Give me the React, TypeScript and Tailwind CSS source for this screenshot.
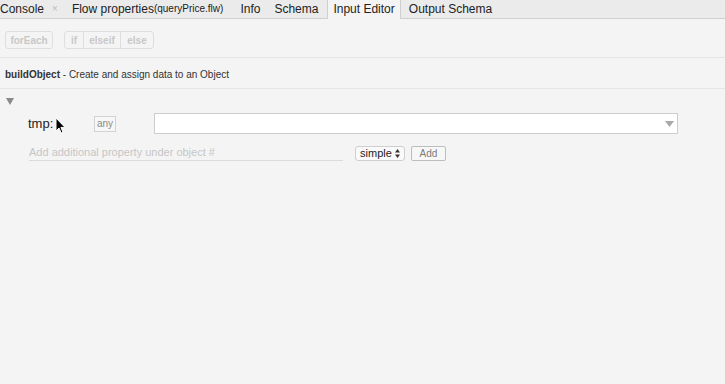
import React from "react";

const font = { fontFamily: '"Liberation Sans", Arial, Helvetica, sans-serif' };

export default function App() {
  return (
    <div className="relative w-[725px] h-[384px] overflow-hidden bg-[#f4f4f4] text-[#222]" style={font}>
      {/* tab bar */}
      <div className="flex h-[19px] items-stretch border-b border-[#cfcfcf] bg-[#ebebeb] pb-[1px] text-[12px] leading-none">
        <div className="flex items-center">Console</div>
        <div className="ml-[8px] flex items-center text-[10px] text-[#bdbdbd]">×</div>
        <div className="ml-[14px] flex items-center">
          Flow properties<span className="text-[10px]">(queryPrice.flw)</span>
        </div>
        <div className="ml-[17px] flex items-center">Info</div>
        <div className="ml-[14px] flex items-center">Schema</div>
        <div className="ml-[9px] -mb-[2px] flex items-center border-x border-[#cfcfcf] bg-[#f4f4f4] pb-[1px] pl-[5px] pr-[5px]">
          Input Editor
        </div>
        <div className="ml-[8px] flex items-center">Output Schema</div>
      </div>

      {/* toolbar */}
      <div className="flex h-[39px] items-start gap-[11px] border-b border-[#e4e4e4] pl-[5px] pt-[12px] text-[10px] font-bold text-[#c8c8c8]">
        <div className="flex h-[18px] w-[48px] items-center justify-center rounded-[3px] border border-[#dedede]">forEach</div>
        <div className="flex h-[18px] rounded-[3px] border border-[#dedede]">
          <div className="flex w-[19px] items-center justify-center border-r border-[#dedede]">if</div>
          <div className="flex w-[37px] items-center justify-center border-r border-[#dedede]">elseif</div>
          <div className="flex w-[32px] items-center justify-center">else</div>
        </div>
      </div>

      {/* description */}
      <div className="flex h-[31px] items-center border-b border-[#e6e6e6] pl-[5px] pt-[3px] text-[10px] text-[#333]">
        <span className="font-bold">buildObject</span>
        <span>&nbsp;- Create and assign data to an Object</span>
      </div>

      {/* triangle */}
      <div className="flex pl-[6px] pt-[9px]">
        <svg width="8" height="7" viewBox="0 0 8 7">
          <path d="M0 0 L8 0 L4 7 Z" fill="#8a8a8a" />
        </svg>
      </div>

      {/* tmp row */}
      <div className="mt-[8px] flex h-[21px] items-center">
        <div className="ml-[28px] w-[66px] text-[13px] text-[#222]">tmp:</div>
        <div className="flex h-[16px] w-[22px] items-center justify-center border border-[#d2d2d2] bg-[#f7f7f7] text-[10px] text-[#8a8a8a]">any</div>
        <div className="ml-[38px] flex h-[21px] w-[524px] items-center justify-end border border-[#cdcdcd] bg-white pr-[3px]">
          <svg width="9" height="6" viewBox="0 0 9 6">
            <path d="M0 0 L9 0 L4.5 6 Z" fill="#a9a9a9" />
          </svg>
        </div>
      </div>

      {/* add row */}
      <div className="mt-[11px] flex h-[16px] items-center">
        <div className="ml-[29px] flex h-[16px] w-[314px] items-center border-b border-[#dcdcdc] pb-[1px] text-[11px] text-[#c6c6c6]">
          Add additional property under object #
        </div>
        <div className="ml-[12px] flex h-[15px] w-[50px] items-center justify-center gap-[3px] rounded-[3px] border border-[#cfcfcf] bg-[#fafafa] text-[11px] text-[#222]">
          <span>simple</span>
          <svg width="5" height="9" viewBox="0 0 5 9">
            <path d="M0 3.5 L2.5 0 L5 3.5 Z M0 5.5 L5 5.5 L2.5 9 Z" fill="#333" />
          </svg>
        </div>
        <div className="ml-[6px] flex h-[15px] w-[35px] items-center justify-center rounded-[2px] border border-[#bdbdbd] bg-[#f7f7f7] text-[10px] text-[#7a7a7a]">Add</div>
      </div>

      {/* mouse cursor */}
      <svg className="absolute left-[55px] top-[117px]" width="11" height="17" viewBox="0 0 11 17">
        <path d="M1 1 L1 14 L4 11 L6.2 16 L8 15.2 L5.9 10.4 L10 10.4 Z" fill="#000" stroke="#fff" strokeWidth="1" strokeLinejoin="round" />
      </svg>
    </div>
  );
}
